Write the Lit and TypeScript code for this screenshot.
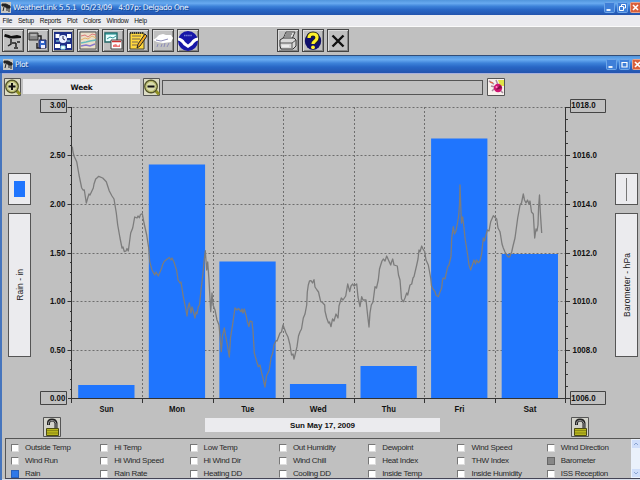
import { LitElement, html, svg, css } from "lit";
import { customElement } from "lit/decorators.js";

const DAYS = ["Sun", "Mon", "Tue", "Wed", "Thu", "Fri", "Sat"];
const BAR_TOPS = [385, 164.5, 261.5, 384, 366, 138.5, 254];
const RAIN = ["3.00", "2.50", "2.00", "1.50", "1.00", "0.50", "0.00"];
const PRESSURE = ["1018.0", "1016.0", "1014.0", "1012.0", "1010.0", "1008.0", "1006.0"];
const LEFT = 72.5;
const RIGHT = 565.5;
const TOP = 107;
const BOTTOM = 399;
const DAY_W = 70.45;
const ROW_H = (BOTTOM - TOP) / 6;

const TRACE =
  "72.3,146.7 73,152 74,156 76.7,161.7 79,175 81.7,188 83,190 84.3,190 86.3,203 88,197 89,194 90,195 93.3,188 94,184 95.7,179 97.5,177.5 98.7,176.3 102.7,178 106.3,181.7 109.3,191 112,196 114,199 116.3,213 117.7,225 120,238 121,243 122,248 123,247 124.3,251.7 126,251 127,248.5 128.3,251 130.7,233 132.7,228 134.7,217 137,218 138,216 139.3,217.7 140.5,214.5 142.3,213.7 144,223 146.7,235 148.7,248 149.7,261.7 152,270 154.7,275 156,272 158.3,276 160,272 161.7,268 162.5,265 164,261.7 166,260 169.3,257.5 171,260 172,258 174,262 176.7,270.7 178,280 180,283 181,282 183.3,296.7 186,310 187,316 188,308 189.3,303 191,313 192,307 193,310 195,318 196,312 197,314 198.3,306.7 199.5,305 201,290 203,273 204,262 205.3,250.7 206.7,270 207.7,262 209,280 210.7,311.7 212,293 213,305 215,310 217,320 219,325 220,336 221.3,351.7 222.5,336 224.3,328 226,338 227,343 229.3,357 230.5,338 232.3,326.7 235,308 237,310 238.5,308.5 241,311.7 242,309 243,313 244.3,309 246,315 247.5,322 249,326.7 250,321 252,321.7 253,331 254.3,353 256,359 258.3,366.7 260,365 261.7,373 263,378 265,387 266.5,376 269.3,370 271,358 272.7,353 274,345 276,340.7 277,341 280,333 281.5,332 283,325 286,333 288,337 290,345 291.5,355 293,354 294,359 295.5,353 297,346.7 298.5,336 300,331.7 301.5,329 303.3,318 305,314 306.7,305 307.3,292 308.3,285 309.5,281 311,280.7 312.5,283 314,279.7 315,287 317,290 318.5,292 320.7,301.7 322,302 324.7,305 325,311 326.7,318 328.5,323 329.5,322 331,326.7 332.5,319 334,321 336,314 338,318 339,306 341.3,298 343,300 345.7,296 347.7,284 349.7,291.7 351,286 352.7,284 354,286 356.7,284 358,297 360,306.7 361.7,296.7 363,300 366,300 367.5,314 369,327 370,313 371.3,305 373,302 375,286.7 376.5,288 378.3,280 379.5,269 380.7,265 382,261 383.3,259 385,261 386.7,256 388,259 390.7,265 391.5,262 392.7,259 394,265 397.3,266 398.5,275 400,280 401.5,299 403.3,301.7 405,298 406.7,293 407.7,295 410,285 411.7,284 413,278 414,276.7 416.7,265 418,259 419,250 420,251.7 421.7,246 423,249 424.7,251.7 426,260 428.3,265 430.7,278 431.5,286 433,289 435,291.7 436,295 438.3,296.7 440,292 441.7,288 442.5,280 443.3,278 445,279 447.7,266.7 449,265 451,256.7 451.7,238 453.3,226.7 454.5,234 456,231 457.3,224 458.6,216 459.5,205 460,185 460.8,207 461.5,223 462.7,217 464,228 465,238 467.7,255 469,265 470.7,270 472,266 474,260 475.5,264 476.5,260 478.3,262.7 480,261 481.7,253.3 483.3,238 484.5,241 487.3,230 489,231 490.7,221.7 493.3,215.7 496.7,219 498,228 500,231.7 502,244 503.3,248 505,252 507.7,256.7 509.5,257 511.7,252 513,246 515,238 517.7,218 519,211 520,205 521.5,203 523.3,194 524.5,200 526,203 527.5,200 529,204 530,201 531.5,212 533.3,214 534.7,238 536,229 537,231 538,225 538.6,207 539.5,195 540.3,212 541.7,233";

const TEXT_W: Record<string, number> = { Sun: 14, Mon: 16, Tue: 13, Wed: 17, Thu: 14, Fri: 10, Sat: 13 };

const icon = (body: unknown) => svg`<svg width="20" height="20" viewBox="0 0 20 20">${body}</svg>`;

const TOOLS = [
  // weather station
  icon(svg`<path d="M2 3l4 1 2 1 6-1 4 1v2l-7 .5-4 0-3-1-3-1z" fill="#111"/><path d="M8 8l0 5-3 2M9 12h4M13 12v4M14 11h3M11 17h4" stroke="#222" stroke-width="1.5" fill="none"/>`),
  // unload data
  icon(svg`<path d="M1 2h9v7H1z" fill="#888" stroke="#333"/><path d="M2.500 4h6" stroke="#ddd"/><path d="M10 5h3v10M9 12v5h4" fill="none" stroke="#222" stroke-width="1.500"/><path d="M11 9h7v8h-7z" fill="#36c" stroke="#225"/><path d="M13 10h3v2h-3zM13 14h4v3h-4z" fill="#eef"/>`),
  // bulletin
  icon(svg`<path d="M1 1h18v18H1z" fill="#1d2f87"/><path d="M2.500 3h4v4h-4zM14 3h4v4h-4zM2 13h5v4H2zM14 13h4v4h-4z" fill="#fff"/><circle cx="10" cy="8" r="4" fill="#e8efff"/><path d="M8 15h4v3H8zM3 10h3M14 10h3" fill="#fff" stroke="#9ee"/><path d="M10 5v3l2 1" stroke="#225" fill="none"/>`),
  // plot
  icon(svg`<path d="M2 1h16v17H2z" fill="#eadfc9" stroke="#555"/><path d="M3 5l4-1 3 2 4-3 4 1" stroke="#d77" fill="none"/><path d="M3 9l4-2 3 1 4-3 4 2" stroke="#e6b36a" fill="none"/><path d="M3 12l5-1 4-1 6-1" stroke="#6bb" fill="none" stroke-width="1.500"/><path d="M3 15l5-1 4 1 5-2" stroke="#87c" fill="none" stroke-width="1.500"/>`),
  // strip charts
  icon(svg`<path d="M2 2h12v9H2z" fill="#e7ffff" stroke="#266" stroke-width="1.400"/><path d="M2 3h12" stroke="#188"/><path d="M4 8l3-2 3 1 3-2" stroke="#399" fill="none"/><path d="M8 9h11v9H8z" fill="#fff" stroke="#444"/><path d="M9 10.500h9" stroke="#c33" stroke-width="1.500"/><path d="M10 16v-2l3-1 2 2 2-2v3z" fill="#e77"/>`),
  // notes
  icon(svg`<path d="M2 2h14v16H2z" fill="#ffd83d" stroke="#443"/><path d="M4 5h9M4 8h8M4 11h6M4 14h5" stroke="#765"/><path d="M17 3l2 2-7 10-3 2 1-4z" fill="#f2aa20" stroke="#222"/><path d="M2 2h14" stroke="#333" stroke-dasharray="1 1" stroke-width="2"/>`),
  // storm
  icon(svg`<path d="M0 9l3-2 3-3 4-1 3 1 5 0 2 3-2 4-8 1-6-1z" fill="#fff"/><path d="M3 9l5 1 7-2M5 13l-1 3M9 13l-1 3M12 12l-1 4M16 12l-2 4" stroke="#8c8cb8" fill="none"/>`),
  // agency emblem
  icon(svg`<circle cx="10" cy="10" r="10" fill="#1616a8"/><path d="M0 6.500Q5 7 7 11L10 13.500 13 11Q15 7 20 6.500V9.500Q17 10 14.500 14L10 17 5.500 14Q3 10 0 9.500z" fill="#fff"/><path d="M6 4.500h8" stroke="#7780d6" stroke-width="1.600" stroke-dasharray="1.500 .6"/>`),
];

const OTHER_TOOLS = [
  icon(svg`<path d="M5 8l3-7h9l-3 7z" fill="#ddd" stroke="#444"/><path d="M8 3h6M7 5h6" stroke="#444"/><path d="M2 9l3-2h11l2 2v6l-3 3H3l-1-3z" fill="#d8d8d8" stroke="#333"/><path d="M2 12h12l4-3M14 12v5" fill="none" stroke="#555"/><path d="M4 15h7" stroke="#fff"/>`),
  icon(svg`<ellipse cx="10" cy="10" rx="8.200" ry="9" fill="#10106c"/><path d="M6 7q0-4 4-4t4 4q0 2-2 3.500t-2 2.500" fill="none" stroke="#222" stroke-width="5"/><path d="M6 7q0-4 4-4t4 3.500q0 2-2 3.500t-2 3" fill="none" stroke="#fff12b" stroke-width="3.200"/><circle cx="10" cy="16.300" r="1.900" fill="#fff12b"/>`),
  icon(svg`<path d="M4.500 4.500l11 11M15.500 4.500l-11 11" stroke="#111" stroke-width="2.400"/>`),
];

const appIcon = svg`<svg width="10" height="11" viewBox="0 0 10 11"><path d="M0 0h10v11H0z" fill="#c8c8c4"/><path d="M1 2l4 0 4 2v2H6L3 4H1zM6 6v3M3 5l-1 4M8 5v5" stroke="#222" fill="#222"/></svg>`;

const magnifier = (plus: boolean) => svg`<svg width="17" height="18" viewBox="0 0 17 18">
  <path d="M.5.500h16v17H.5z" fill="#dcdcc4" stroke="#555"/>
  <path d="M12 12l4 4.500" stroke="#8f8f22" stroke-width="3"/>
  <circle cx="8" cy="8.500" r="6.200" fill="#d9dcae" stroke="#55572a" stroke-width="1.500"/>
  <circle cx="8" cy="8.500" r="5" fill="none" stroke="#b9bb65"/>
  <path d="M4.500 8.500h7" stroke="#111" stroke-width="2"/>
  ${plus ? svg`<path d="M8 5v7" stroke="#111" stroke-width="2"/>` : null}</svg>`;

const lock = svg`<svg width="18" height="20" viewBox="0 0 18 20"><path d="M.5.500h17v19H.5z" fill="#d3d3cb" stroke="#555"/>
  <path d="M5.500 8V6q0-3 3.500-3t4 3v6" fill="none" stroke="#222" stroke-width="3"/><path d="M5.500 7.500V6q0-2.500 3.500-2.500t4 3V12" fill="none" stroke="#999"/>
  <path d="M3.500 11.500h12v7h-12z" fill="#b7b51c" stroke="#4c4c12"/><path d="M4 13.500h11M4 16h11" stroke="#8a8815"/></svg>`;

const winButton = (kind: string) => svg`<svg width="11" height="11" viewBox="0 0 11 11">
  <rect x=".5" y=".5" width="10" height="10" rx="1" fill=${kind === "close" ? "#d9603c" : "#3f7fd8"} stroke=${kind === "close" ? "#e9a48c" : "#6ea6e8"}/>
  ${kind === "min" ? svg`<path d="M2.500 8h4" stroke="#fff" stroke-width="1.800"/>` : null}
  ${kind === "max" ? svg`<path d="M3 3.500h5v4.500H3z" fill="none" stroke="#fff" stroke-width="1.200"/>` : null}
  ${kind === "restore" ? svg`<path d="M4.500 4V2.500h4V6H7M2.500 4.500h4v4h-4z" fill="none" stroke="#fff"/>` : null}
  ${kind === "close" ? svg`<path d="M3 3l5 5M8 3l-5 5" stroke="#fff" stroke-width="1.600"/>` : null}</svg>`;

const SENSORS = [
  ["Outside Temp", "Hi Temp", "Low Temp", "Out Humidity", "Dewpoint", "Wind Speed", "Wind Direction"],
  ["Wind Run", "Hi Wind Speed", "Hi Wind Dir", "Wind Chill", "Heat Index", "THW Index", "Barometer"],
  ["Rain", "Rain Rate", "Heating DD", "Cooling DD", "Inside Temp", "Inside Humidity", "ISS Reception"],
];

@customElement("week-chart")
class WeekChart extends LitElement {
  static styles = css`
    :host { display: block; width: 572px; height: 320px; }
    svg { display: block; }
    text { font: bold 8.5px "Liberation Sans", Arial, sans-serif; fill: #111; }
    .grid { stroke: #6e6e6e; stroke-width: 1; stroke-dasharray: 2 2; fill: none; }
    .axis { stroke: #333; stroke-width: 1; fill: none; }
    .bar { fill: #1f75fe; }
    .trace { stroke: #7c7c7c; stroke-width: 1.3; fill: none; stroke-linejoin: round; }
    .box { fill: none; stroke: #444; }
  `;
  render() {
    const minor = Array.from({ length: 31 }, (_, i) => TOP + (i * ROW_H) / 5);
    const minorRight = Array.from({ length: 25 }, (_, i) => TOP + (i * ROW_H) / 4);
    return html`<svg width="572" height="320" viewBox="38 97 572 320">
      ${RAIN.slice(0, 6).map((_, i) => svg`<path class="grid" d=${`M${LEFT} ${Math.floor(TOP + i * ROW_H)}.500H${RIGHT}`}/>`)}
      ${DAYS.slice(1).map((_, i) => svg`<path class="grid" d=${`M${Math.floor(LEFT + (i + 1) * DAY_W)}.500 ${TOP}V${BOTTOM}`}/>`)}
      ${BAR_TOPS.map((y, i) => svg`<rect class="bar" x=${78.2 + i * 70.58} y=${y} width="56.300" height=${BOTTOM - y}/>`)}
      <polyline class="trace" points=${TRACE}/>
      <path class="axis" d="M71.500 107V403M565.500 107V403M68 398.500H570"/>
      ${DAYS.slice(1).map((_, i) => svg`<path class="axis" d=${`M${Math.floor(LEFT + (i + 1) * DAY_W)}.500 399V403`}/>`)}
      ${minor.slice(0, -1).map((y, i) => svg`<path class="axis" d=${`M${i % 5 ? 70 : 67.5} ${Math.floor(y) + 0.5}H72`}/>`)}
      ${minorRight.slice(0, -1).map((y, i) => svg`<path class="axis" d=${`M565 ${Math.floor(y) + 0.5}H${i % 4 ? 568 : 570}`}/>`)}
      <path class="box" d="M40.500 99.500h26v13h-26zM570.500 99.500h35v13h-35zM40.500 391.500h26v13h-26zM570.500 391.500h35v13h-35z"/>
      ${RAIN.map((t, i) => {
        const y = TOP + i * ROW_H + (i === 0 ? 1.3 : i === 6 ? 1.6 : 2.8);
        return svg`<text x="50" y=${y} textLength="15.300" lengthAdjust="spacingAndGlyphs">${t}</text>
          <text x=${i % 6 ? 572.5 : 571.3} y=${y} textLength="24.300" lengthAdjust="spacingAndGlyphs">${PRESSURE[i]}</text>`;
      })}
      ${DAYS.map((d, i) => svg`<text x=${106.5 + i * 70.58 - TEXT_W[d] / 2} y="412" textLength=${TEXT_W[d]} lengthAdjust="spacingAndGlyphs">${d}</text>`)}
    </svg>`;
  }
}

@customElement("app-root")
class AppRoot extends LitElement {
  static styles = css`
    :host { display: flex; flex-direction: column; width: 640px; height: 480px; overflow: hidden; background: #c0c0c0; color: #222; font-family: "Liberation Sans", Arial, sans-serif; }
    * { box-sizing: border-box; }
    svg { display: block; flex: none; }
    .title { display: flex; align-items: center; gap: 2px; flex: none; color: #e8f2ff; white-space: pre; text-shadow: 1px 1px #174a97; background: linear-gradient(#5195dc, #68aaf0 22%, #3d82d9 42%, #2866c5 65%, #2354ad); }
    .main { height: 15px; padding: 0 0 1px 1px; }
    .sub { height: 18px; padding-left: 3px; border-top: 1px solid #314d78; }
    .name { flex: 1; font: 7.6px "DejaVu Sans", sans-serif; letter-spacing: -.34px; }
    .wins { display: flex; gap: 2px; margin-right: -1px; }
    .sub .wins { margin-right: -3px; }
    .menu { display: flex; flex: none; align-items: center; height: 12px; padding-left: 2.5px; gap: 5.8px; background: #ebebef; border-bottom: 1px solid #fafafa; font: 6.5px "Liberation Sans", sans-serif; letter-spacing: -.2px; color: #111; }
    .tools { display: flex; flex: none; height: 28px; padding: 2px 0 0 2px; gap: 3px; }
    .tool { width: 22px; height: 23px; display: flex; align-items: center; justify-content: center; border: 1px solid #444; box-shadow: inset 1px 1px #ddd, inset -1px -1px #888; }
    .tool.later { margin-left: 75px; }
    .plot { flex: 1; display: flex; flex-direction: column; min-height: 0; }
    .body { flex: 1; display: flex; flex-direction: column; border-left: 2px solid #4675bd; }
    .controls { display: flex; height: 24px; padding: 4px 0 0 2px; align-items: flex-start; border-top: 1px solid #a8b0dc; }
    .week { width: 117px; height: 15px; margin: 1px 3px 0 2px; background: #ebebee; text-align: center; font: bold 7.4px/17px "DejaVu Sans", sans-serif; letter-spacing: -.2px; color: #111; }
    .scroll { width: 321px; height: 15px; margin: 2px 4px 0 2px; border: 1px solid #555; border-bottom-width: 1.5px; }
    .chart { display: flex; height: 320px; }
    .side { width: 36px; padding: 76px 0 0 6px; display: flex; flex-direction: column; gap: 8px; }
    .side.right { width: 30px; padding-left: 5px; }
    .swatch { width: 23px; height: 32px; background: #ebebee; border: 1px solid #555; border-right-width: 1.500px; display: flex; align-items: center; justify-content: center; }
    .fill { width: 11px; height: 16px; background: #1f75fe; }
    .stroke { width: 1px; height: 23px; background: #777; }
    .label { width: 23px; height: 144px; background: #ebebee; border: 1px solid #555; display: flex; align-items: center; justify-content: center; }
    .label span { writing-mode: vertical-rl; transform: rotate(180deg); font-size: 8.5px; white-space: nowrap; }
    .right .label span { letter-spacing: .1px; }
    .dates { display: flex; height: 21px; padding-left: 41px; }
    .date { width: 235px; height: 14px; margin: 1px 131px 0 144px; background: #ebebee; text-align: center; font: bold 8px/15px "Liberation Sans", sans-serif; letter-spacing: -.08px; color: #111; }
    .sensors { display: flex; margin-left: 3px; height: 41px; border: 1px solid #555; border-right: 0; border-bottom: 1.5px solid #445; }
    .grid { flex: 1; display: grid; grid-template-columns: repeat(6, 89.300px) 1fr; grid-template-rows: repeat(3, 13px); padding: 2px 0 0 5px; overflow: hidden; }
    .item { display: flex; align-items: center; gap: 6px; font-size: 8px; letter-spacing: -.3px; white-space: nowrap; color: #2a2a2a; }
    .check { width: 8px; height: 8px; flex: none; background: #fff; border: 1px solid #777; border-right-color: #ddd; border-bottom-color: #ddd; }
    .check.rain { background: #2f78e8; border-color: #2960b8; }
    .check.baro { background: #888; border-color: #666; }
    .bar { width: 9px; background: #eaf1fb; display: flex; flex-direction: column; justify-content: space-between; align-items: center; padding: 1px 0; }
    .bottom { flex: 1; background: #d9dfeb; }
  `;
  render() {
    return html`
      <div class="title main">${appIcon}<span class="name">WeatherLink 5.5.1  05/23/09   4:07p: Delgado One</span>
        <div class="wins">${winButton("min")}${winButton("restore")}${winButton("close")}</div></div>
      <nav class="menu">${["File", "Setup", "Reports", "Plot", "Colors", "Window", "Help"].map((m) => html`<span>${m}</span>`)}</nav>
      <div class="tools">
        ${TOOLS.map((t) => html`<div class="tool">${t}</div>`)}
        ${OTHER_TOOLS.map((t, i) => html`<div class="tool ${i === 0 ? "later" : ""}">${t}</div>`)}
      </div>
      <section class="plot">
        <div class="title sub">${appIcon}<span class="name">Plot</span>
          <div class="wins">${winButton("min")}${winButton("max")}${winButton("close")}</div></div>
        <div class="body">
          <div class="controls">${magnifier(true)}<div class="week">Week</div>${magnifier(false)}<div class="scroll"></div>
            <svg width="18" height="18" viewBox="0 0 18 18"><path d="M.5.500h17v17H.5z" fill="#f8f2ed" stroke="#555"/><path d="M11 2h6v6h-4z" fill="#dfe345"/><path d="M2 3l5 3M4 8l4 1M5 13l4-4M9 2l2 5M13 12l3 3" stroke="#a98a9e" stroke-width="1.500"/><circle cx="11" cy="10" r="4.200" fill="#cf1671"/><path d="M9 12l4-5 2 3z" fill="#7c1546"/><path d="M3 4l3 1" stroke="#e63"/><circle cx="9.500" cy="9" r="1" fill="#ff8cc4"/></svg>
          </div>
          <div class="chart">
            <div class="side"><div class="swatch"><div class="fill"></div></div><div class="label"><span>Rain - in</span></div></div>
            <week-chart></week-chart>
            <div class="side right"><div class="swatch"><div class="stroke"></div></div><div class="label"><span>Barometer - hPa</span></div></div>
          </div>
          <div class="dates">${lock}<div class="date">Sun May 17, 2009</div>${lock}</div>
          <div class="sensors"><div class="grid">
            ${SENSORS.flat().map((s) => html`<div class="item"><span class="check ${s === "Rain" ? "rain" : s === "Barometer" ? "baro" : ""}"></span>${s}</div>`)}
          </div><div class="bar">
            <svg width="8" height="8" viewBox="0 0 8 8"><path d="M0 0h8v8H0z" fill="#cfdefa"/><path d="M2 5l2-2 2 2" fill="none" stroke="#8ba5d2"/></svg>
            <svg width="8" height="8" viewBox="0 0 8 8"><path d="M0 0h8v8H0z" fill="#cfdefa"/><path d="M2 3l2 2 2-2" fill="none" stroke="#8ba5d2"/></svg>
          </div></div>
          <div class="bottom"></div>
        </div>
      </section>`;
  }
}
